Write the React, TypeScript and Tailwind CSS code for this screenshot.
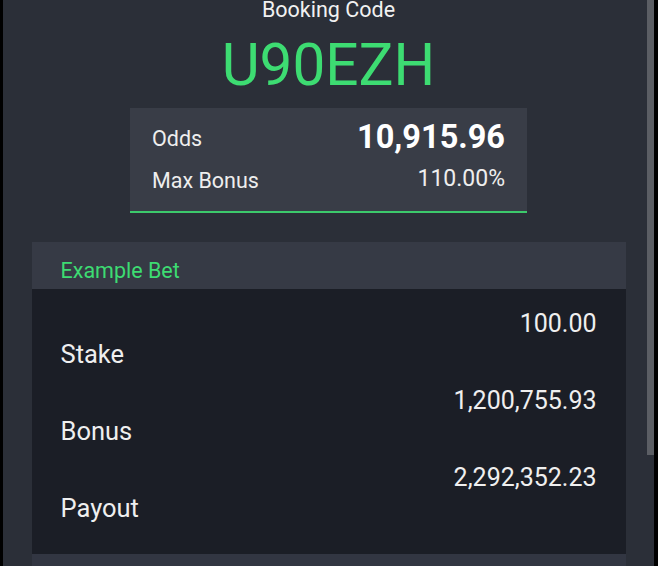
import React from 'react';

const rows = [
  { label: 'Stake', value: '100.00' },
  { label: 'Bonus', value: '1,200,755.93' },
  { label: 'Payout', value: '2,292,352.23' },
];

const App: React.FC = () => {
  return (
    <div className="w-[658px] h-[566px] bg-black overflow-hidden flex font-['Roboto',sans-serif]">
      <div className="relative ml-[3px] w-[651px] h-full bg-[#2b2f38] flex flex-col items-center">
        {/* scrollbar */}
        <div className="absolute right-0 top-0 w-[7px] h-[455px] bg-[#5b5e64]" />

        <div className="mt-[-2px] h-[24px] leading-[24px] text-[21.5px] text-[#f1f1f1]">Booking Code</div>
        <div className="mt-[10px] h-[66px] leading-[66px] text-[58.5px] text-[#3ddc72]">U90EZH</div>

        <div className="mt-[10px] w-[397px] bg-[#393d47] border-b-2 border-[#3cc96b] px-[22px] pt-[11px] pb-[15px]">
          <div className="flex justify-between items-center h-[40px]">
            <span className="text-[21.5px] text-[#eeeeee]">Odds</span>
            <span className="text-[32.5px] font-bold text-white mb-[3px]">10,915.96</span>
          </div>
          <div className="mt-[7px] flex justify-between items-center h-[30px]">
            <span className="text-[21.5px] text-[#eeeeee]">Max Bonus</span>
            <span className="text-[23px] text-[#eeeeee] mb-[3px]">110.00%</span>
          </div>
        </div>

        <div className="mt-[29px] w-[594px]">
          <div className="h-[47px] bg-[#363a45] pl-[29px] pt-[14px]">
            <div className="leading-[30px] text-[21.5px] text-[#3ddc72]">Example Bet</div>
          </div>
          <div className="bg-[#1b1e26] px-[29px] pt-[21px] pb-[31px] flex flex-col gap-[18px]">
            {rows.map((r) => (
              <div key={r.label}>
                <div className="h-[28px] leading-[28px] text-right text-[25px] text-[#efefef]">{r.value}</div>
                <div className="mt-[1px] h-[30px] leading-[30px] text-[25.5px] text-[#efefef]">{r.label}</div>
              </div>
            ))}
          </div>
          <div className="h-[20px] bg-[#323642]" />
        </div>
      </div>
    </div>
  );
};

export default App;
